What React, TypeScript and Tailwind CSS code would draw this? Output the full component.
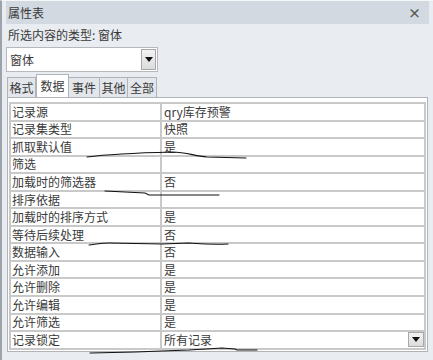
import React from "react";

const rows: { label: string; value: string; dropdown?: boolean }[] = [
  { label: "记录源", value: "qry库存预警" },
  { label: "记录集类型", value: "快照" },
  { label: "抓取默认值", value: "是" },
  { label: "筛选", value: "" },
  { label: "加载时的筛选器", value: "否" },
  { label: "排序依据", value: "" },
  { label: "加载时的排序方式", value: "是" },
  { label: "等待后续处理", value: "否" },
  { label: "数据输入", value: "否" },
  { label: "允许添加", value: "是" },
  { label: "允许删除", value: "是" },
  { label: "允许编辑", value: "是" },
  { label: "允许筛选", value: "是" },
  { label: "记录锁定", value: "所有记录", dropdown: true },
];

function DropBtn({ cls }: { cls: string }) {
  return (
    <div className={`flex items-center justify-center border border-[#a8a8a8] bg-gradient-to-b from-[#f2f2f2] to-[#dcdcdc] ${cls}`}>
      <svg width="8" height="5" viewBox="0 0 8 5">
        <path d="M0 0 H8 L4 5 Z" fill="#111" />
      </svg>
    </div>
  );
}

export default function App() {
  const font = { fontFamily: '"Noto Sans CJK SC", "Noto Sans", sans-serif' };
  return (
    <div
      className="relative w-[433px] h-[360px] overflow-hidden bg-[#e9ecf0] text-[12px] text-[#3a3a3a] border-l-[2px] border-l-[#9da3aa] border-t border-t-[#f4f6f8]"
      style={font}
    >
      <div className="flex h-full flex-col pl-[4px] pr-[4px]">
        {/* title bar */}
        <div className="flex h-[23px] items-center justify-between bg-[#d3d9e0] pl-[2px] pr-[8px]">
          <span className="leading-none text-[#3a3a3a]">属性表</span>
          <span className="text-[13px] font-bold leading-none text-[#555]">×</span>
        </div>
        {/* type */}
        <div className="flex h-[21px] items-center pl-[2px] leading-none">所选内容的类型: 窗体</div>
        {/* combo */}
        <div className="mt-[2px] flex h-[25px] w-[152px] items-center justify-between border border-[#b5b9be] bg-white pl-[3px] pr-[1px]">
          <span className="leading-none">窗体</span>
          <DropBtn cls="h-[21px] w-[15px]" />
        </div>
        {/* tabs */}
        <div className="mt-[2px] flex h-[23px] items-end pl-[1px]">
          <div className="flex h-[20px] w-[29px] items-center justify-center border border-b-0 border-[#b0b4b8] bg-[#e3e6ea] leading-none">格式</div>
          <div className="flex h-[23px] w-[33px] items-center justify-center border border-b-0 border-[#b0b4b8] bg-white leading-none">数据</div>
          <div className="flex h-[20px] w-[31px] items-center justify-center border border-b-0 border-l-0 border-[#b0b4b8] bg-[#e3e6ea] leading-none">事件</div>
          <div className="flex h-[20px] w-[28px] items-center justify-center border border-b-0 border-l-0 border-[#b0b4b8] bg-[#e3e6ea] leading-none">其他</div>
          <div className="flex h-[20px] w-[29px] items-center justify-center border border-b-0 border-l-0 border-[#b0b4b8] bg-[#e3e6ea] leading-none">全部</div>
        </div>
        {/* grid */}
        <div className="ml-[1px] mr-[1px] border border-[#b0b4b8] bg-white px-[1px] pt-[4px] pb-[1px]">
          <div className="border-l-2 border-r-2 border-t-2 border-[#c9c9c9]">
            {rows.map((r) => (
              <div key={r.label} className="flex h-[17.55px] border-b-2 border-[#c9c9c9]">
                <div className="flex w-[151px] shrink-0 items-center border-r-2 border-[#c9c9c9] pl-[1px] leading-none">
                  {r.label}
                </div>
                <div className="flex flex-1 items-center justify-between pl-[2px] leading-none">
                  <span>{r.value}</span>
                  {r.dropdown && <DropBtn cls="h-[15px] w-[16px]" />}
                </div>
              </div>
            ))}
          </div>
        </div>
      </div>
      {/* handwritten underline marks */}
      <svg className="pointer-events-none absolute left-0 top-0" width="433" height="360" viewBox="0 0 433 360">
        <g fill="none" stroke="#111" strokeWidth="1.1" strokeLinecap="round">
          <path d="M85 156 C100 154 130 152 170 151 C185 151 192 155 205 156 L244 157" />
          <path d="M103 190 L143 192 L147 194 L217 194" />
          <path d="M87 244 C95 243 100 242 107 242 L160 243 L187 242 C200 243 210 244 226 243" />
          <path d="M88 352 L133 351 L187 349 L220 347 L233 348 L235 349 L255 349" />
        </g>
      </svg>
    </div>
  );
}
